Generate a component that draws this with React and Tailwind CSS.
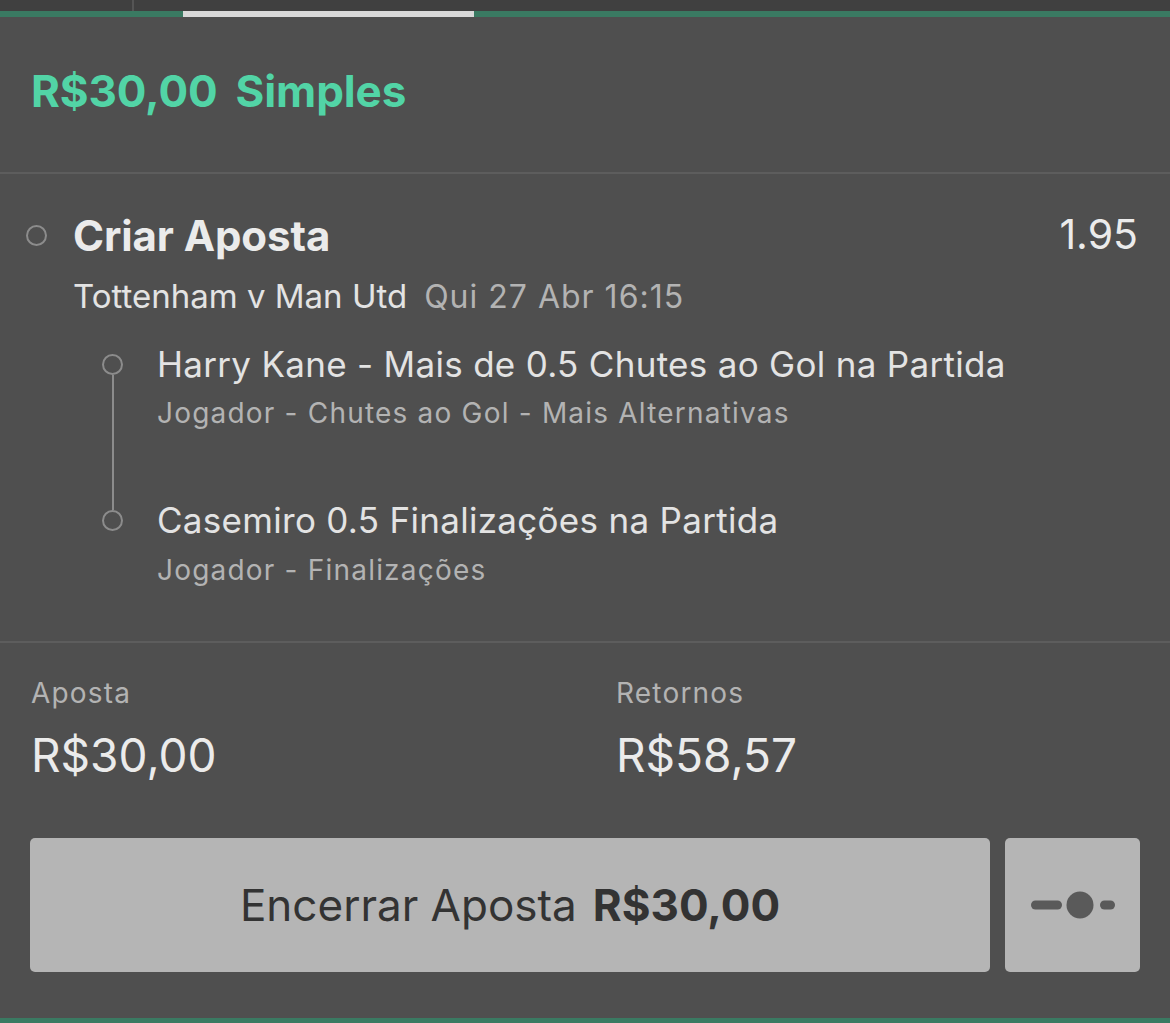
export default function App() {
  const font = { fontFamily: 'Inter, "Noto Sans", sans-serif' };
  return (
    <div className="w-[1170px] h-[1023px] bg-[#4f4f4f] flex flex-col overflow-hidden" style={font}>
      {/* top strip */}
      <div className="h-[11px] bg-[#404040] flex">
        <div className="w-[134px] border-r-2 border-[#555555]" />
      </div>
      <div className="h-[6px] flex">
        <div className="w-[183px] bg-[#3a7a62]" />
        <div className="w-[291px] bg-[#d9d9d9]" />
        <div className="flex-1 bg-[#3a7a62]" />
      </div>
      {/* header */}
      <div className="h-[157px] flex items-center pl-[31px] pb-[7px] border-b-2 border-[#5d5d5d]">
        <span className="text-[#52d4a6] font-bold text-[44px] tracking-[-0.1px]">R$30,00</span>
        <span className="text-[#52d4a6] font-bold text-[44px] ml-[18px] tracking-[-0.1px]">Simples</span>
      </div>
      {/* bet */}
      <div className="h-[469px] border-b-2 border-[#5d5d5d] pt-[35px] pl-[26px] pr-[32px]">
        <div className="flex items-center h-[52px]">
          <div className="w-[21px] h-[21px] rounded-full border-2 border-[#8c8c8c]" />
          <div className="ml-[26px] text-[#ebebeb] font-bold text-[42px] tracking-[-0.1px]">Criar Aposta</div>
          <div className="ml-auto text-[#ebebeb] text-[41px] font-normal">1.95</div>
        </div>
        <div className="flex items-baseline ml-[47px] mt-[15px] h-[40px] leading-[40px]">
          <span className="text-[#e3e3e3] text-[33px]">Tottenham v Man Utd</span>
          <span className="text-[#b3b3b3] text-[32px] ml-[17px] tracking-[1px]">Qui 27 Abr 16:15</span>
        </div>
        <div className="flex ml-[76px] mt-[26px]">
          <div className="flex flex-col items-center w-[21px] pt-[12px]">
            <div className="w-[21px] h-[21px] rounded-full border-2 border-[#8c8c8c] shrink-0" />
            <div className="w-[2px] h-[135px] bg-[#8c8c8c]" />
            <div className="w-[21px] h-[21px] rounded-full border-2 border-[#8c8c8c] shrink-0" />
          </div>
          <div className="ml-[34px] flex flex-col">
            <div className="text-[#e3e3e3] text-[35px] leading-[44px] tracking-[0.3px]">Harry Kane - Mais de 0.5 Chutes ao Gol na Partida</div>
            <div className="text-[#b3b3b3] text-[28px] leading-[36px] mt-[9px] tracking-[1.2px]">Jogador - Chutes ao Gol - Mais Alternativas</div>
            <div className="text-[#e3e3e3] text-[35px] leading-[44px] mt-[67px] tracking-[0.3px]">Casemiro 0.5 Finalizações na Partida</div>
            <div className="text-[#b3b3b3] text-[28px] leading-[36px] mt-[10px] tracking-[1.2px]">Jogador - Finalizações</div>
          </div>
        </div>
      </div>
      {/* stake */}
      <div className="flex pl-[31px] pt-[32px]">
        <div className="w-[585px]">
          <div className="text-[#b3b3b3] text-[28px] leading-[36px] tracking-[1.2px]">Aposta</div>
          <div className="text-[#ebebeb] text-[46px] leading-[56px] mt-[16px]">R$30,00</div>
        </div>
        <div>
          <div className="text-[#b3b3b3] text-[28px] leading-[36px] tracking-[1.2px]">Retornos</div>
          <div className="text-[#ebebeb] text-[46px] leading-[56px] mt-[16px]">R$58,57</div>
        </div>
      </div>
      <div className="flex pl-[30px] mt-[55px] gap-[15px]">
        <div className="w-[960px] h-[134px] bg-[#b5b5b5] rounded-[5px] flex items-center justify-center text-[#333333] text-[44px]">
          <span>Encerrar Aposta</span>
          <span className="font-bold ml-[16px]">R$30,00</span>
        </div>
        <div className="w-[135px] h-[134px] bg-[#b5b5b5] rounded-[5px] flex items-center justify-center">
          <svg width="84" height="28" viewBox="0 0 84 28">
            <rect x="0" y="9.5" width="31" height="9" rx="4.5" fill="#5a5a5a" />
            <circle cx="49" cy="14" r="13.5" fill="#5a5a5a" />
            <rect x="69" y="9.5" width="15" height="9" rx="4.5" fill="#5a5a5a" />
          </svg>
        </div>
      </div>
      <div className="flex-1" />
      <div className="h-[5px] bg-[#3a7a62]" />
    </div>
  );
}
